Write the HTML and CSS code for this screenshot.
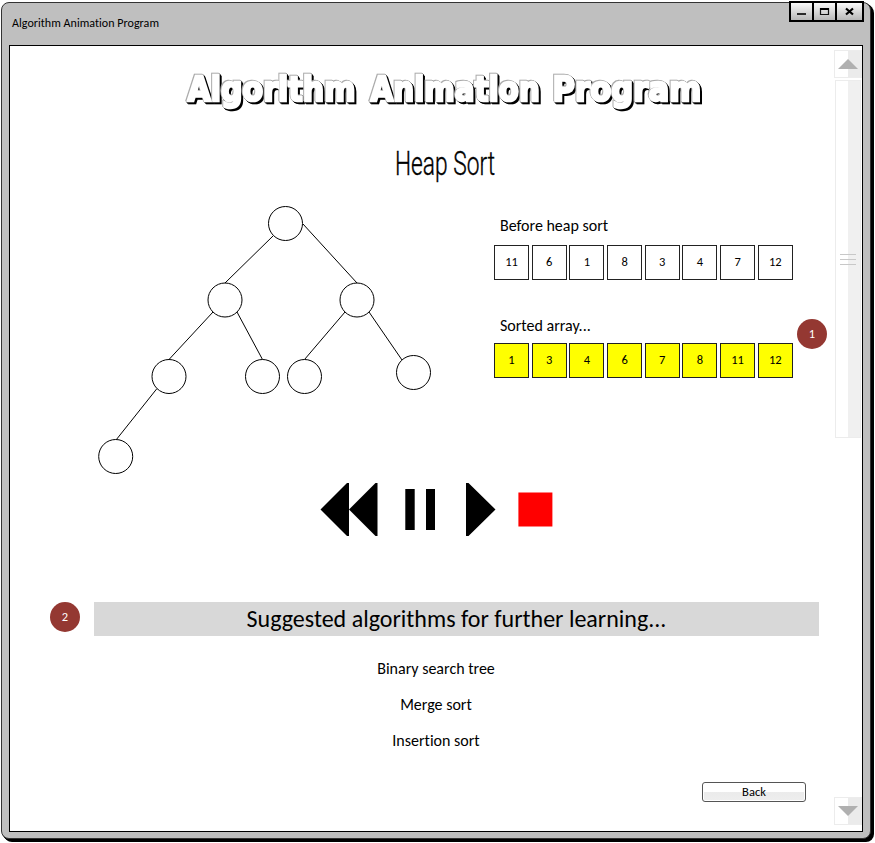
FILE: index.html
```html
<!DOCTYPE html>
<html lang="en">
<head>
<meta charset="utf-8">
<title>Algorithm Animation Program</title>
<link rel="stylesheet" href="styles.css">
</head>
<body>
<div class="window">
  <header class="titlebar">
    <span class="caption">Algorithm Animation Program</span>
    <div class="window-buttons">
      <button class="win-btn" aria-label="Minimize"><svg width="11" height="10"><path d="M1 7h9" stroke="#000" stroke-width="1.6"/></svg></button>
      <button class="win-btn" aria-label="Maximize"><svg width="11" height="10"><path d="M1.5 1.5h8v6h-8z" fill="none" stroke="#111" stroke-width="1.2"/><path d="M1 2h9" stroke="#000" stroke-width="2"/></svg></button>
      <button class="win-btn wide" aria-label="Close"><svg width="11" height="10"><path d="M2 1.500l7 6M9 1.500l-7 6" stroke="#000" stroke-width="2.200"/></svg></button>
    </div>
  </header>
  <div class="panel">
    <main class="content">
      <svg class="logo" width="824" height="74">
        <g class="logo-text">
          <text transform="translate(177.5 55) scale(.885 1)">Algorithm</text>
          <text transform="translate(360.5 55) scale(.865 1)">Animation</text>
          <text transform="translate(542.5 55) scale(.905 1)">Program</text>
        </g>
      </svg>
      <svg class="subtitle" width="824" height="75">
        <text x="385" y="55" textLength="100" lengthAdjust="spacingAndGlyphs">Heap Sort</text>
      </svg>
      <section class="stage">
        <svg class="tree" width="370" height="285">
          <g stroke="#000" stroke-width="1" fill="none">
            <path d="M193.500 40.500L145 88M223 29L277 88M133 117L89 164.500M157 117L182.500 164.500M265 117L224.500 164.500M289 117L322 165M77 193.500L36 245"/>
            <g fill="#fff">
              <circle cx="205.500" cy="28.500" r="17"/><circle cx="145" cy="105" r="17"/><circle cx="277" cy="105" r="17"/>
              <circle cx="89" cy="181.500" r="17"/><circle cx="182.500" cy="181.500" r="17"/><circle cx="224.500" cy="181.500" r="17"/>
              <circle cx="333.500" cy="177.500" r="17"/><circle cx="35.700" cy="261.500" r="17"/>
            </g>
          </g>
        </svg>
        <div class="arrays">
          <p class="label before">Before heap sort</p>
          <div class="array">
            <span>11</span><span>6</span><span>1</span><span>8</span><span>3</span><span>4</span><span>7</span><span>12</span>
          </div>
          <p class="label sorted-label">Sorted array...</p>
          <div class="array sorted">
            <span>1</span><span>3</span><span>4</span><span>6</span><span>7</span><span>8</span><span>11</span><span>12</span>
          </div>
        </div>
        <span class="badge first">1</span>
      </section>
      <div class="controls">
        <svg width="260" height="60">
          <path d="M10.500 29.500L37 3H39V56H37ZM39 29.500L65.500 3H67.500V56H65.500ZM95.300 9h9.400v41h-9.400zM116 9h9v41h-9zM156 3h2.500L185.500 29.500L158.500 56H156Z"/>
          <path d="M208.400 12.400h34v34h-34z" fill="red"/>
        </svg>
      </div>
      <section class="suggest">
        <span class="badge">2</span>
        <h2>Suggested algorithms for further learning...</h2>
      </section>
      <ul class="links">
        <li>Binary search tree</li>
        <li>Merge sort</li>
        <li>Insertion sort</li>
      </ul>
      <footer><button class="back">Back</button></footer>
    </main>
    <aside class="scrollbar">
      <div class="arrow"><svg width="20" height="10"><path d="M0 10L10 0L20 10z" fill="#b0b0b0"/></svg></div>
      <div class="thumb"><i></i><i></i><i></i></div>
      <div class="arrow down"><svg width="20" height="10"><path d="M0 0L10 10L20 0z" fill="#b0b0b0"/></svg></div>
    </aside>
  </div>
</div>
</body>
</html>
```
FILE: styles.css
```css
* { box-sizing: border-box; }
html { height: 843px; background: #fff; }
body {
  margin: 0; padding: 2px 0 0 1px; height: 843px; color: #000;
  font-family: Carlito, Lato, sans-serif; font-variant-ligatures: none;
}
p, h2, ul { margin: 0; padding: 0; }
button { font: inherit; padding: 0; }
svg { display: block; }
.window {
  width: 870px; height: 837px; padding: 0 6px 6px 7px;
  background: #bfbfbf; border: 1px solid #333; border-radius: 8px;
  box-shadow: 1px 1px 0 #000, 2px 2px 0 #000, 3px 3px 0 #000;
}
.titlebar { height: 42px; display: flex; justify-content: space-between; align-items: flex-start; }
.caption { font-size: 12px; line-height: 14px; margin: 13px 0 0 3px; letter-spacing: 0.040px; }
.window-buttons { display: flex; margin: -2px 0 0 0; border: 1px solid #000; }
.win-btn {
  width: 23px; height: 19px; display: grid; place-items: center;
  background: linear-gradient(#fafafa, #b8b8b8); border: 1px solid #000; border-radius: 0;
}
.win-btn.wide { width: 27px; }
.panel { width: 854px; height: 787px; display: flex; background: #fff; border: 1px solid #000; }
.content { width: 824px; display: flex; flex-direction: column; }
.logo, .subtitle { flex: none; }
.logo-text {
  font: bold 34px "DejaVu Sans", sans-serif; fill: #fff; stroke: #fff; stroke-width: 2.500;
  filter: drop-shadow(-0.500px -0.500px 0 #aaa) drop-shadow(1px 1px 0 #000) drop-shadow(1px 1px 0 #000);
}
.subtitle { font: 300 34px Roboto, sans-serif; stroke: #000; stroke-width: 0.400; }
.stage { height: 285px; display: flex; padding-left: 70px; }
.tree { flex: none; }
.arrays { width: 300px; margin-left: 44px; }
.label { font-size: 16px; line-height: 18px; padding-left: 6px; }
.before { margin-top: 22px; }
.array { display: flex; gap: 2.700px; margin-top: 10px; }
.array span {
  width: 35px; height: 35px; flex: none; border: 1px solid #222;
  font-size: 12.500px; line-height: 31px; text-align: center;
}
.sorted-label { margin-top: 37px; }
.sorted span { background: #ff0; }
.sorted { margin-top: 8px; }
.badge {
  width: 30px; height: 30px; border-radius: 50%; flex: none;
  background: #943832; color: #fff; font-size: 12.500px; line-height: 29px; text-align: center;
}
.badge.first { margin: 124px 0 0 3px; }
.controls { height: 60px; padding-left: 300px; }
.suggest { display: flex; margin-top: 62px; padding-left: 40px; align-items: center; height: 34px; gap: 14px; }
.suggest h2 {
  width: 725px; height: 34px; background: #d8d8d8; font-size: 24px; font-weight: 400;
  line-height: 33px; text-align: center;
}
.suggest .badge { margin-top: -4px; }
.links { list-style: none; width: 240px; margin: 16px 0 0 306px; font-size: 16px; text-align: center; }
.links li { height: 36px; line-height: 34px; }
footer { display: flex; justify-content: flex-end; margin-top: 22px; padding-right: 28px; }
.back {
  width: 104px; height: 20px; border: 1px solid #555; border-radius: 3px;
  box-shadow: inset 0 0 0 1px #fff; font-size: 12.500px; line-height: 18px;
  background: linear-gradient(#fff 50%, #ebebeb 50%, #eee);
}
.scrollbar { width: 28px; padding-top: 4px; }
.arrow {
  width: 28px; height: 28px; display: grid; place-items: center; border: 1px solid #ececec;
  background: linear-gradient(90deg, #fff 50%, #ebebeb 50%);
}
.thumb {
  width: 26px; height: 358px; margin: 2px 0 0 1px; border: 1px solid #ececec;
  background: linear-gradient(90deg, #fff 50%, #f0f0f0 50%);
  display: flex; flex-direction: column; align-items: center; justify-content: center; gap: 4px;
}
.thumb i { width: 16px; height: 1px; background: #c8c8c8; }
.down { margin-top: 359px; }
```
